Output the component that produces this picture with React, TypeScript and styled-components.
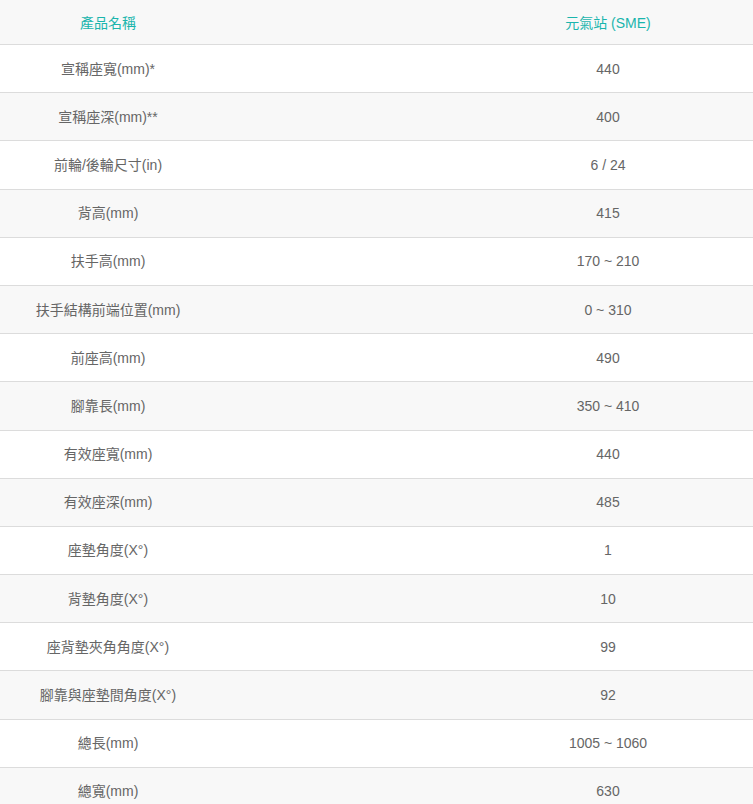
import React from "react";
import styled, { createGlobalStyle } from "styled-components";

const Global = createGlobalStyle`
  html, body { margin: 0; padding: 0; background: #fff; overflow: hidden; }
  body { font-family: "Liberation Sans", "Noto Sans CJK TC", sans-serif; }
`;

const Frame = styled.div`
  width: 100%;
  overflow: hidden;
`;

const Table = styled.table`
  width: 1000px;
  border-collapse: collapse;
  font-size: 14px;
  color: #666;
  table-layout: fixed;
`;

const HeadCell = styled.th`
  height: 44px;
  padding: 0;
  font-weight: normal;
  color: #1ab5ad;
  background: #f8f8f8;
  text-align: center;
  vertical-align: middle;
  border-bottom: 1px solid #dcdcdc;
`;

const Row = styled.tr<{ $alt: boolean }>`
  background: ${(p) => (p.$alt ? "#f8f8f8" : "#ffffff")};
`;

const Cell = styled.td`
  height: 47.2px;
  padding: 0;
  text-align: center;
  vertical-align: middle;
  border-bottom: 1px solid #dcdcdc;
  line-height: 20px;
`;

const rows: [string, string][] = [
  ["宣稱座寬(mm)*", "440"],
  ["宣稱座深(mm)**", "400"],
  ["前輪/後輪尺寸(in)", "6 / 24"],
  ["背高(mm)", "415"],
  ["扶手高(mm)", "170 ~ 210"],
  ["扶手結構前端位置(mm)", "0 ~ 310"],
  ["前座高(mm)", "490"],
  ["腳靠長(mm)", "350 ~ 410"],
  ["有效座寬(mm)", "440"],
  ["有效座深(mm)", "485"],
  ["座墊角度(X°)", "1"],
  ["背墊角度(X°)", "10"],
  ["座背墊夾角角度(X°)", "99"],
  ["腳靠與座墊間角度(X°)", "92"],
  ["總長(mm)", "1005 ~ 1060"],
  ["總寬(mm)", "630"],
];

export default function App() {
  return (
    <>
      <Global />
      <Frame>
        <Table>
          <colgroup>
            <col style={{ width: 216 }} />
            <col style={{ width: 784 }} />
          </colgroup>
          <thead>
            <tr>
              <HeadCell>產品名稱</HeadCell>
              <HeadCell>元氣站 (SME)</HeadCell>
            </tr>
          </thead>
          <tbody>
            {rows.map(([k, v], i) => (
              <Row key={i} $alt={i % 2 === 1}>
                <Cell>{k}</Cell>
                <Cell>{v}</Cell>
              </Row>
            ))}
          </tbody>
        </Table>
      </Frame>
    </>
  );
}
